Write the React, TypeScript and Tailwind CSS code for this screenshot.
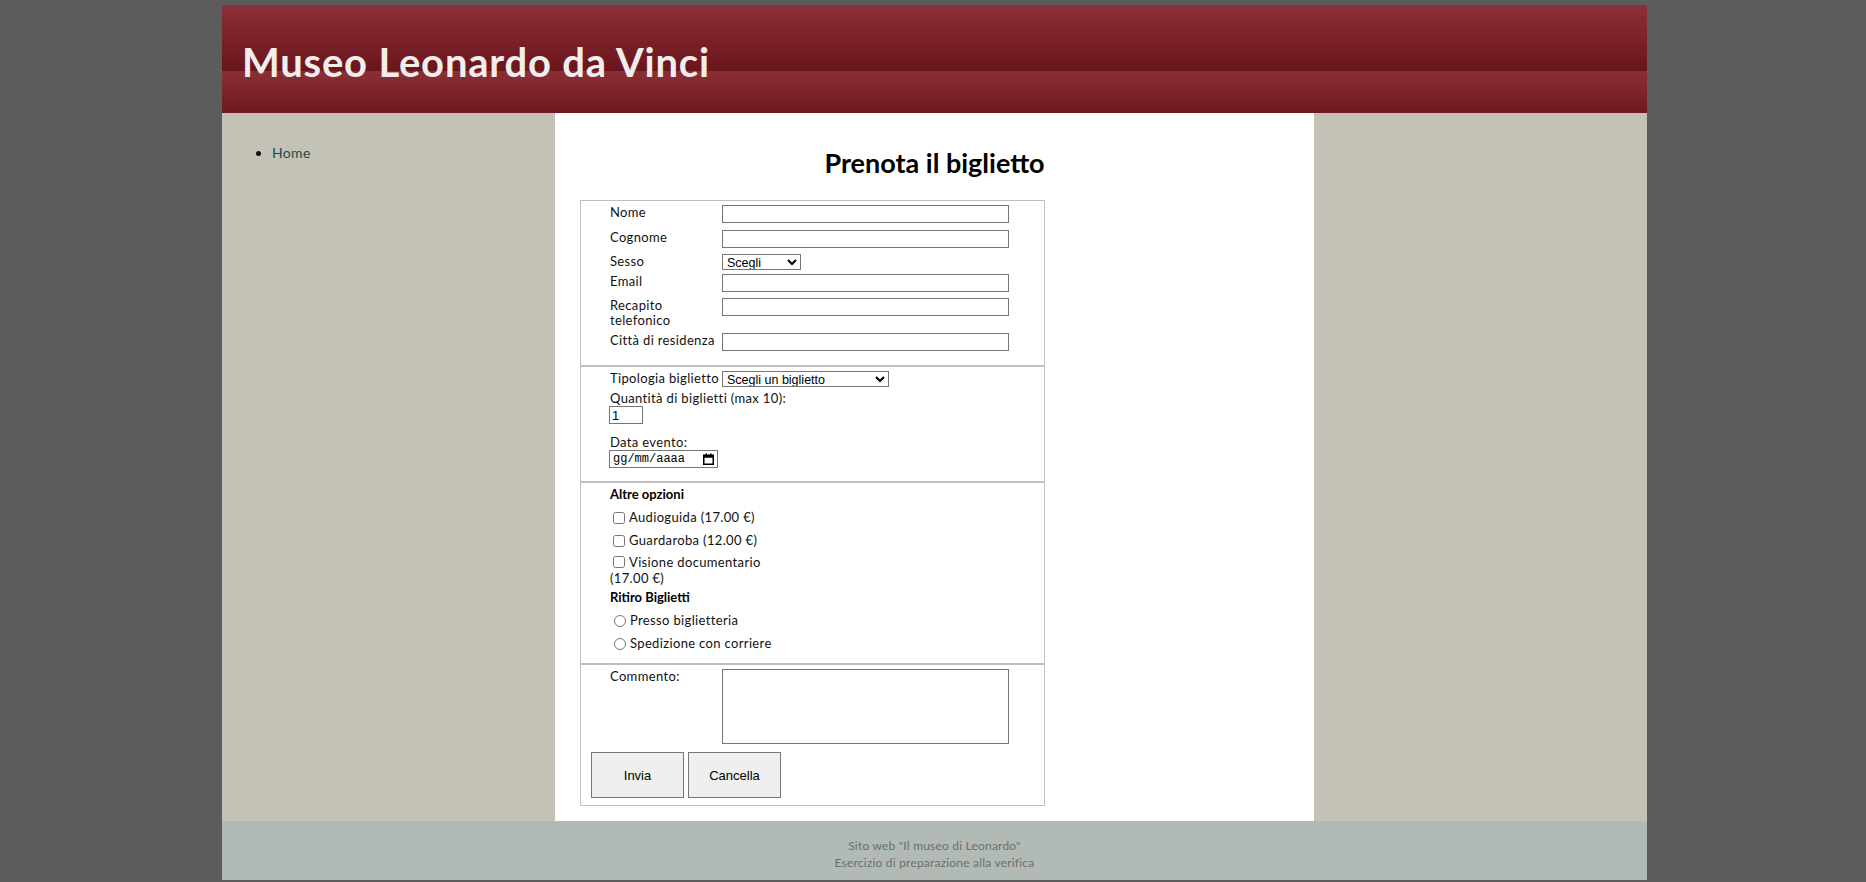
import React from "react";

const Row = ({ label, mt, children }: { label: React.ReactNode; mt: string; children: React.ReactNode }) => (
  <div className={`flex items-start ${mt}`}>
    <label className="w-[112px] shrink-0 whitespace-nowrap">{label}</label>
    {children}
  </div>
);

const textInput = "block h-[18px] w-[287px] border border-[#767676] bg-white px-[2px]";
const selectCls =
  "block h-[16px] border border-[#767676] bg-white text-[12.5px] leading-[14px] tracking-normal text-black font-['Liberation_Sans',Arial,sans-serif]";
const btnCls =
  "h-[46px] w-[93px] border border-[#767676] bg-[#efefef] font-['Liberation_Sans',Arial,sans-serif] text-[13px] tracking-normal text-black";

const App: React.FC = () => {
  return (
    <div className="min-h-[882px] bg-[#5c5c5c] pt-[5px] font-[Lato,sans-serif] text-[13px] leading-[15px] tracking-[0.35px] text-[#111]">
      <div className="ml-[222px] w-[1425px]">
        <header className="h-[108px] bg-[linear-gradient(to_bottom,#8d2f38_0%,#6a151b_61%,#8b2e37_61%,#6f1a20_100%)] pl-[20px] pt-[33px]">
          <h1 className="text-[40px] font-bold leading-[48px] tracking-[0.8px] text-[#f0eded]">Museo Leonardo da Vinci</h1>
        </header>

        <div className="flex">
          <aside className="w-[333px] shrink-0 bg-[#c4c2b6] pl-[10px] pt-[31px]">
            <ul className="list-disc pl-[40px] text-[14px] leading-[17px]">
              <li>
                <a href="#" className="text-[#1d4b48]">Home</a>
              </li>
            </ul>
          </aside>

          <main className="w-[759px] shrink-0 bg-white">
            <h2 className="mt-[34px] text-center text-[27px] font-bold leading-[32px] tracking-normal text-black">Prenota il biglietto</h2>

            <form className="mb-[15px] ml-[25px] mt-[21px] w-[465px]">
              <div className="border border-[#c0c0c0] pb-[14px] pl-[29px] pt-[4px]">
                <Row label="Nome" mt="">
                  <input type="text" className={textInput} />
                </Row>
                <Row label="Cognome" mt="mt-[7px]">
                  <input type="text" className={textInput} />
                </Row>
                <Row label="Sesso" mt="mt-[6px]">
                  <select className={`${selectCls} w-[79px]`} defaultValue="">
                    <option value="">Scegli</option>
                    <option>M</option>
                    <option>F</option>
                  </select>
                </Row>
                <Row label="Email" mt="mt-[4px]">
                  <input type="email" className={textInput} />
                </Row>
                <Row
                  label={
                    <>
                      Recapito
                      <br />
                      telefonico
                    </>
                  }
                  mt="mt-[6px]"
                >
                  <input type="tel" className={textInput} />
                </Row>
                <Row label="Città di residenza" mt="mt-[5px]">
                  <input type="text" className={textInput} />
                </Row>
              </div>

              <div className="border border-[#c0c0c0] pb-[13px] pl-[29px] pt-[4px]">
                <Row label="Tipologia biglietto" mt="">
                  <select className={`${selectCls} w-[167px]`} defaultValue="">
                    <option value="">Scegli un biglietto</option>
                    <option>Intero</option>
                    <option>Ridotto</option>
                  </select>
                </Row>
                <div className="mt-[4px]">Quantità di biglietti (max 10):</div>
                <input
                  type="number"
                  defaultValue={1}
                  className="-ml-[1px] block h-[18px] w-[34px] border border-[#767676] bg-white px-[2px] font-['Liberation_Sans',Arial,sans-serif] text-[13px] tracking-normal text-black"
                />
                <div className="mt-[11px]">Data evento:</div>
                <div className="-ml-[1px] flex h-[18px] w-[109px] items-center justify-between border border-[#767676] bg-white pl-[3px] pr-[3px]">
                  <span className="font-['Liberation_Mono',monospace] text-[12px] leading-[14px] tracking-normal text-black">gg/mm/aaaa</span>
                  <svg width="11" height="12" viewBox="0 0 11 12" className="text-black">
                    <rect x="0.75" y="2.25" width="9.5" height="9" fill="none" stroke="currentColor" strokeWidth="1.5" />
                    <rect x="0.75" y="2.25" width="9.5" height="2.5" fill="currentColor" />
                    <rect x="2.5" y="0.5" width="1.5" height="2.5" fill="currentColor" />
                    <rect x="7" y="0.5" width="1.5" height="2.5" fill="currentColor" />
                  </svg>
                </div>
              </div>

              <div className="border border-[#c0c0c0] pb-[12px] pl-[29px] pt-[4px]">
                <div className="font-bold tracking-normal text-black">Altre opzioni</div>
                <div className="mt-[8px] flex items-center">
                  <input type="checkbox" className="ml-[3px] mr-[4px] h-[12px] w-[12px]" />
                  <span>Audioguida (17.00 €)</span>
                </div>
                <div className="mt-[8px] flex items-center">
                  <input type="checkbox" className="ml-[3px] mr-[4px] h-[12px] w-[12px]" />
                  <span>Guardaroba (12.00 €)</span>
                </div>
                <div className="mt-[6px] leading-[16px]">
                  <div className="flex items-center">
                    <input type="checkbox" className="ml-[3px] mr-[4px] h-[12px] w-[12px]" />
                    <span>Visione documentario</span>
                  </div>
                  <div>(17.00 €)</div>
                </div>
                <div className="mt-[4px] font-bold tracking-normal text-black">Ritiro Biglietti</div>
                <div className="mt-[8px] flex items-center">
                  <input type="radio" name="ritiro" className="ml-[4px] mr-[4px] h-[12px] w-[12px]" />
                  <span>Presso biglietteria</span>
                </div>
                <div className="mt-[8px] flex items-center">
                  <input type="radio" name="ritiro" className="ml-[4px] mr-[4px] h-[12px] w-[12px]" />
                  <span>Spedizione con corriere</span>
                </div>
              </div>

              <div className="border border-[#c0c0c0] pb-[7px] pl-[10px] pt-[4px]">
                <div className="ml-[19px] flex items-start">
                  <label className="w-[112px] shrink-0">Commento:</label>
                  <textarea className="block h-[75px] w-[287px] resize-none border border-[#767676] bg-white" />
                </div>
                <div className="mt-[8px] flex gap-[4px]">
                  <button type="submit" className={btnCls}>
                    Invia
                  </button>
                  <button type="reset" className={btnCls}>
                    Cancella
                  </button>
                </div>
              </div>
            </form>
          </main>

          <aside className="w-[333px] shrink-0 bg-[#c4c2b6]" />
        </div>

        <footer className="h-[59px] bg-[#b1bab5] pt-[16px] text-center text-[12px] leading-[17px] tracking-[0.2px] text-[#6e6e6e]">
          <p>Sito web "Il museo di Leonardo"</p>
          <p>Esercizio di preparazione alla verifica</p>
        </footer>
      </div>
    </div>
  );
};

export default App;
